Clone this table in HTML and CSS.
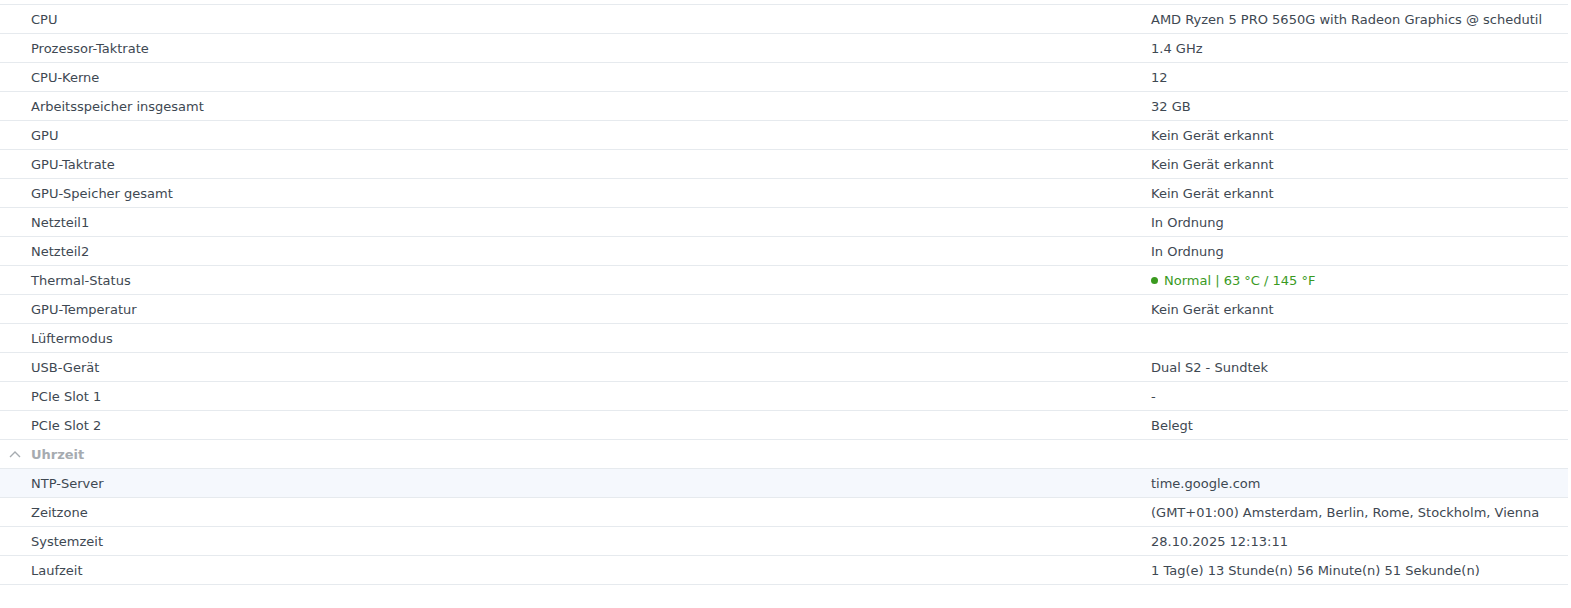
FILE: index.html
```html
<!DOCTYPE html>
<html>
  <head>
    <title>Info-Center</title>
    <link rel="stylesheet" href="styles.css">
  </head>
  <body>
    <div class="info-table">
      <div class="row"><span class="label">CPU</span><span class="value">AMD Ryzen 5 PRO 5650G with Radeon Graphics @ schedutil</span></div>
      <div class="row"><span class="label">Prozessor-Taktrate</span><span class="value">1.4 GHz</span></div>
      <div class="row"><span class="label">CPU-Kerne</span><span class="value">12</span></div>
      <div class="row"><span class="label">Arbeitsspeicher insgesamt</span><span class="value">32 GB</span></div>
      <div class="row"><span class="label">GPU</span><span class="value">Kein Gerät erkannt</span></div>
      <div class="row"><span class="label">GPU-Taktrate</span><span class="value">Kein Gerät erkannt</span></div>
      <div class="row"><span class="label">GPU-Speicher gesamt</span><span class="value">Kein Gerät erkannt</span></div>
      <div class="row"><span class="label">Netzteil1</span><span class="value">In Ordnung</span></div>
      <div class="row"><span class="label">Netzteil2</span><span class="value">In Ordnung</span></div>
      <div class="row"><span class="label">Thermal-Status</span><span class="value status-ok"><i class="dot"></i>Normal | 63 °C / 145 °F</span></div>
      <div class="row"><span class="label">GPU-Temperatur</span><span class="value">Kein Gerät erkannt</span></div>
      <div class="row"><span class="label">Lüftermodus</span><span class="value"></span></div>
      <div class="row"><span class="label">USB-Gerät</span><span class="value">Dual S2 - Sundtek</span></div>
      <div class="row"><span class="label">PCIe Slot 1</span><span class="value">-</span></div>
      <div class="row"><span class="label">PCIe Slot 2</span><span class="value">Belegt</span></div>

      <div class="group-header">
        <svg class="chevron" width="12" height="8" viewBox="0 0 12 8"><path d="M1 7 L6 2 L11 7" fill="none" stroke="#a6abb0" stroke-width="1.4"/></svg>
        <span>Uhrzeit</span>
      </div>
      <div class="row selected"><span class="label">NTP-Server</span><span class="value">time.google.com</span></div>
      <div class="row"><span class="label">Zeitzone</span><span class="value">(GMT+01:00) Amsterdam, Berlin, Rome, Stockholm, Vienna</span></div>
      <div class="row"><span class="label">Systemzeit</span><span class="value">28.10.2025 12:13:11</span></div>
      <div class="row"><span class="label">Laufzeit</span><span class="value">1 Tag(e) 13 Stunde(n) 56 Minute(n) 51 Sekunde(n)</span></div>
    </div>
  </body>
</html>
```

FILE: styles.css
```css
body {
    margin: 0;
    padding-top: 4px;
    font-family: "DejaVu Sans", Verdana, sans-serif;
    font-size: 13px;
    color: #3e4852;
    background: #fff;
}

.info-table {
    width: 1568px;
    border-top: 1px solid #e6eaee;
}

.row {
    display: grid;
    grid-template-columns: 1118px 1fr;
    align-items: center;
    height: 28px;
    padding-left: 31px;
    border-bottom: 1px solid #e6eaee;
}

.row.selected {
    background: #f5f8fd;
}

.value {
    padding-left: 2px;
    white-space: nowrap;
}

.status-ok {
    color: #3a9a1f;
    display: flex;
    align-items: center;
}

.dot {
    display: inline-block;
    width: 7px;
    height: 7px;
    border-radius: 50%;
    background: #3a9a1f;
    margin-right: 6px;
}

.group-header {
    display: flex;
    align-items: center;
    height: 28px;
    padding-left: 9px;
    border-bottom: 1px solid #e6eaee;
    color: #a6abb0;
    font-weight: bold;
}

.chevron {
    margin-right: 10px;
}
```
